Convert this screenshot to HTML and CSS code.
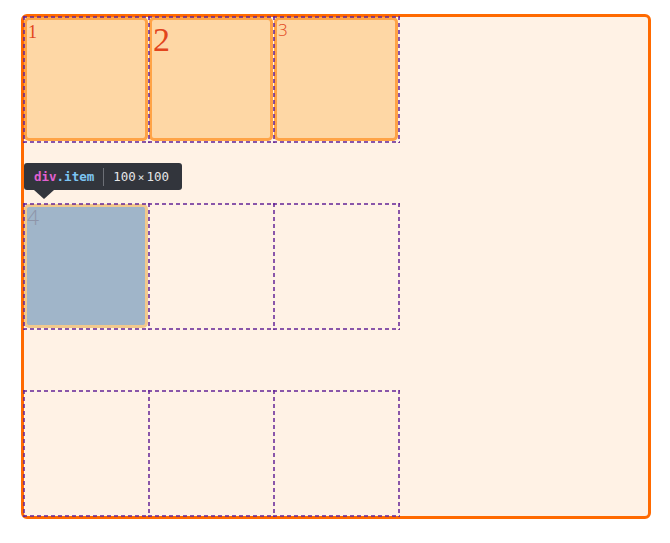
FILE: index.html
```html
<!DOCTYPE html>
<html>
<head>
<meta charset="utf-8">
<link rel="stylesheet" href="styles.css">
</head>
<body>
<div class="container">
  <div class="cell"><div class="item i1">1</div></div>
  <div class="cell"><div class="item i2">2</div></div>
  <div class="cell"><div class="item i3">3</div></div>
  <div class="cell"><div class="item i4">4</div></div>
  <div class="cell"></div>
  <div class="cell"></div>
  <div class="cell"></div>
  <div class="cell"></div>
  <div class="cell"></div>
  <div class="tooltip"><span class="tag">div</span><span class="cls">.item</span><span class="sep"></span><span class="dim">100<span class="x">×</span>100</span></div>
</div>
</body>
</html>
```
FILE: styles.css
```css
html, body { margin: 0; padding: 0; background: #fff; }
body { padding: 14px 0 0 21px; }
.container {
  position: relative;
  width: 624px;
  height: 499px;
  border: 3px solid #ff6a00;
  border-radius: 6px;
  background: #fff2e5;
  display: grid;
  grid-template-columns: repeat(3, 125px);
  grid-template-rows: repeat(3, 125px);
  row-gap: 62px;
  align-content: start;
}
.cell { position: relative; }
.cell::after {
  content: "";
  position: absolute;
  inset: -1px 0 -1px -1px;
  z-index: 1;
  pointer-events: none;
  background:
    repeating-linear-gradient(90deg, rgba(98, 34, 150, 0.75) 0 4px, transparent 4px 7px) left top / 100% 2px no-repeat,
    repeating-linear-gradient(90deg, rgba(98, 34, 150, 0.75) 0 4px, transparent 4px 7px) left bottom / 100% 2px no-repeat,
    repeating-linear-gradient(180deg, rgba(98, 34, 150, 0.75) 0 4px, transparent 4px 7px) left top / 2px 100% no-repeat;
}
.cell:nth-child(3n)::after {
  right: -1px;
  background:
    repeating-linear-gradient(90deg, rgba(98, 34, 150, 0.75) 0 4px, transparent 4px 7px) left top / 100% 2px no-repeat,
    repeating-linear-gradient(90deg, rgba(98, 34, 150, 0.75) 0 4px, transparent 4px 7px) left bottom / 100% 2px no-repeat,
    repeating-linear-gradient(180deg, rgba(98, 34, 150, 0.75) 0 4px, transparent 4px 7px) left top / 2px 100% no-repeat,
    repeating-linear-gradient(180deg, rgba(98, 34, 150, 0.75) 0 4px, transparent 4px 7px) right top / 2px 100% no-repeat;
}
.item {
  position: absolute;
  inset: 0 1px 1px 0;
  box-sizing: border-box;
  background: #fed7a5;
  border: 3px solid #ffa346;
  border-radius: 5px;
  font-family: "Liberation Serif", serif;
  font-size: 18px;
  line-height: 1;
  color: #e2451c;
  padding: 3px 0 0 1px;
}
.i2 { font-size: 34px; padding-top: 3px; padding-left: 1px; }
.i3 { font-family: "Open Sans", sans-serif; font-weight: 300; font-size: 17px; padding-top: 1px; }
.i4 { background: #a0b5c9; border-color: #f2c98c; color: #8d94a8; font-family: "Open Sans", sans-serif; font-weight: 300; font-size: 21px; padding: 0; line-height: 1; }
.tooltip {
  position: absolute;
  left: 0;
  top: 146px;
  height: 27px;
  width: 158px;
  box-sizing: border-box;
  padding: 0 0 0 10px;
  background: #32353c;
  border-radius: 3px;
  display: flex;
  align-items: center;
  font-family: "DejaVu Sans Mono", monospace;
  font-size: 12.5px;
  font-weight: bold;
  color: #e6e6e8;
  z-index: 2;
}
.tooltip::after {
  content: "";
  position: absolute;
  left: 10px;
  bottom: -9px;
  border-left: 10px solid transparent;
  border-right: 10px solid transparent;
  border-top: 9px solid #32353c;
}
.tag { color: #e060d0; }
.cls { color: #7cc4f2; }
.sep { width: 1px; height: 18px; background: #6c6f76; margin: 0 9px 0 9px; }
.dim { font-weight: normal; font-size: 12.5px; }
.x { margin: 0 2px; font-size: 11px; }
```
